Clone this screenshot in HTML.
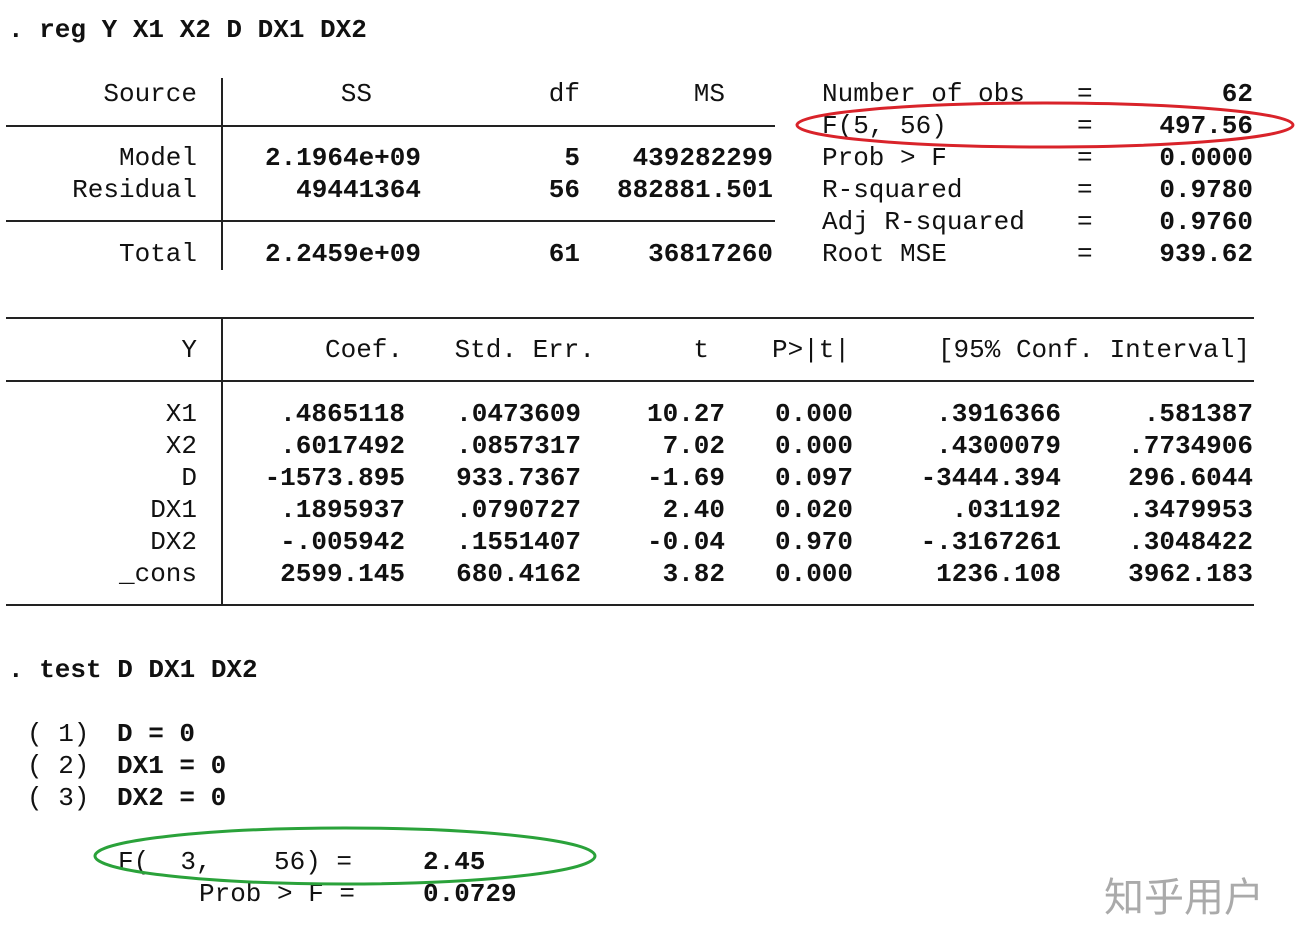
<!DOCTYPE html>
<html><head><meta charset="utf-8"><style>
html,body{margin:0;padding:0;background:#fff;}
body{width:1298px;height:939px;position:relative;overflow:hidden;font-family:"Liberation Mono",monospace;font-size:26px;color:#111;}
.t{position:absolute;line-height:32px;white-space:pre;}
.b{font-weight:bold;}
.h{position:absolute;height:1.5px;background:#222;}
.v{position:absolute;width:1.5px;background:#222;}
</style></head><body>
<div class="t b" style="left:8px;top:14px">. reg Y X1 X2 D DX1 DX2</div>

<div class="v" style="left:221px;top:78px;height:192px"></div>
<div class="h" style="left:6px;top:125px;width:769px"></div>
<div class="h" style="left:6px;top:220px;width:769px"></div>
<div class="h" style="left:6px;top:317px;width:1248px"></div>
<div class="h" style="left:6px;top:380px;width:1248px"></div>
<div class="h" style="left:6px;top:604px;width:1248px"></div>
<div class="v" style="left:221px;top:317px;height:288px"></div>

<div id="c"></div>
<script>
var W=1298;
function R(x,y,s,b){var d=document.createElement('div');d.className='t'+(b?' b':'');d.style.right=(W-x)+'px';d.style.top=(y-15)+'px';d.textContent=s;document.body.appendChild(d);}
function L(x,y,s,b){var d=document.createElement('div');d.className='t'+(b?' b':'');d.style.left=x+'px';d.style.top=(y-15)+'px';d.textContent=s;document.body.appendChild(d);}
R(197,93,'Source');R(372,93,'SS');R(580,93,'df');R(725,93,'MS');
R(197,157,'Model');R(421,157,'2.1964e+09',1);R(580,157,'5',1);R(773,157,'439282299',1);
R(197,189,'Residual');R(421,189,'49441364',1);R(580,189,'56',1);R(773,189,'882881.501',1);
R(197,253,'Total');R(421,253,'2.2459e+09',1);R(580,253,'61',1);R(773,253,'36817260',1);
var st=[['Number of obs','62'],['F(5, 56)','497.56'],['Prob > F','0.0000'],['R-squared','0.9780'],['Adj R-squared','0.9760'],['Root MSE','939.62']];
st.forEach(function(s,i){var y=93+32*i;L(822,y,s[0]);L(1077,y,'=');R(1253,y,s[1],1);});
R(197,349,'Y');R(403,349,'Coef.');R(595,349,'Std. Err.');R(709,349,'t');R(850,349,'P>|t|');R(1250,349,'[95% Conf. Interval]');
var rows=[['X1','.4865118','.0473609','10.27','0.000','.3916366','.581387'],
['X2','.6017492','.0857317','7.02','0.000','.4300079','.7734906'],
['D','-1573.895','933.7367','-1.69','0.097','-3444.394','296.6044'],
['DX1','.1895937','.0790727','2.40','0.020','.031192','.3479953'],
['DX2','-.005942','.1551407','-0.04','0.970','-.3167261','.3048422'],
['_cons','2599.145','680.4162','3.82','0.000','1236.108','3962.183']];
var xs=[197,405,581,725,853,1061,1253];
rows.forEach(function(r,i){var y=413+32*i;r.forEach(function(s,j){R(xs[j],y,s,j>0);});});
L(8,669,'. test D DX1 DX2',1);
L(27,733,'( 1)');L(117,733,'D = 0',1);
L(27,765,'( 2)');L(117,765,'DX1 = 0',1);
L(27,797,'( 3)');L(117,797,'DX2 = 0',1);
L(118,861,'F(  3,    56) =');L(423,861,'2.45',1);
L(199,893,'Prob > F =');L(423,893,'0.0729',1);
</script>
<svg style="position:absolute;left:0;top:0" width="1298" height="939">
<ellipse cx="1045" cy="125" rx="248" ry="22" fill="none" stroke="#d9232a" stroke-width="3"/>
<ellipse cx="345" cy="856" rx="250" ry="28" fill="none" stroke="#2aa23a" stroke-width="3"/>
</svg>
<div class="t" style="left:1104px;top:870px;font-family:'Noto Sans CJK SC',sans-serif;font-size:40px;line-height:48px;color:#aaa">知乎用户</div>
</body></html>
